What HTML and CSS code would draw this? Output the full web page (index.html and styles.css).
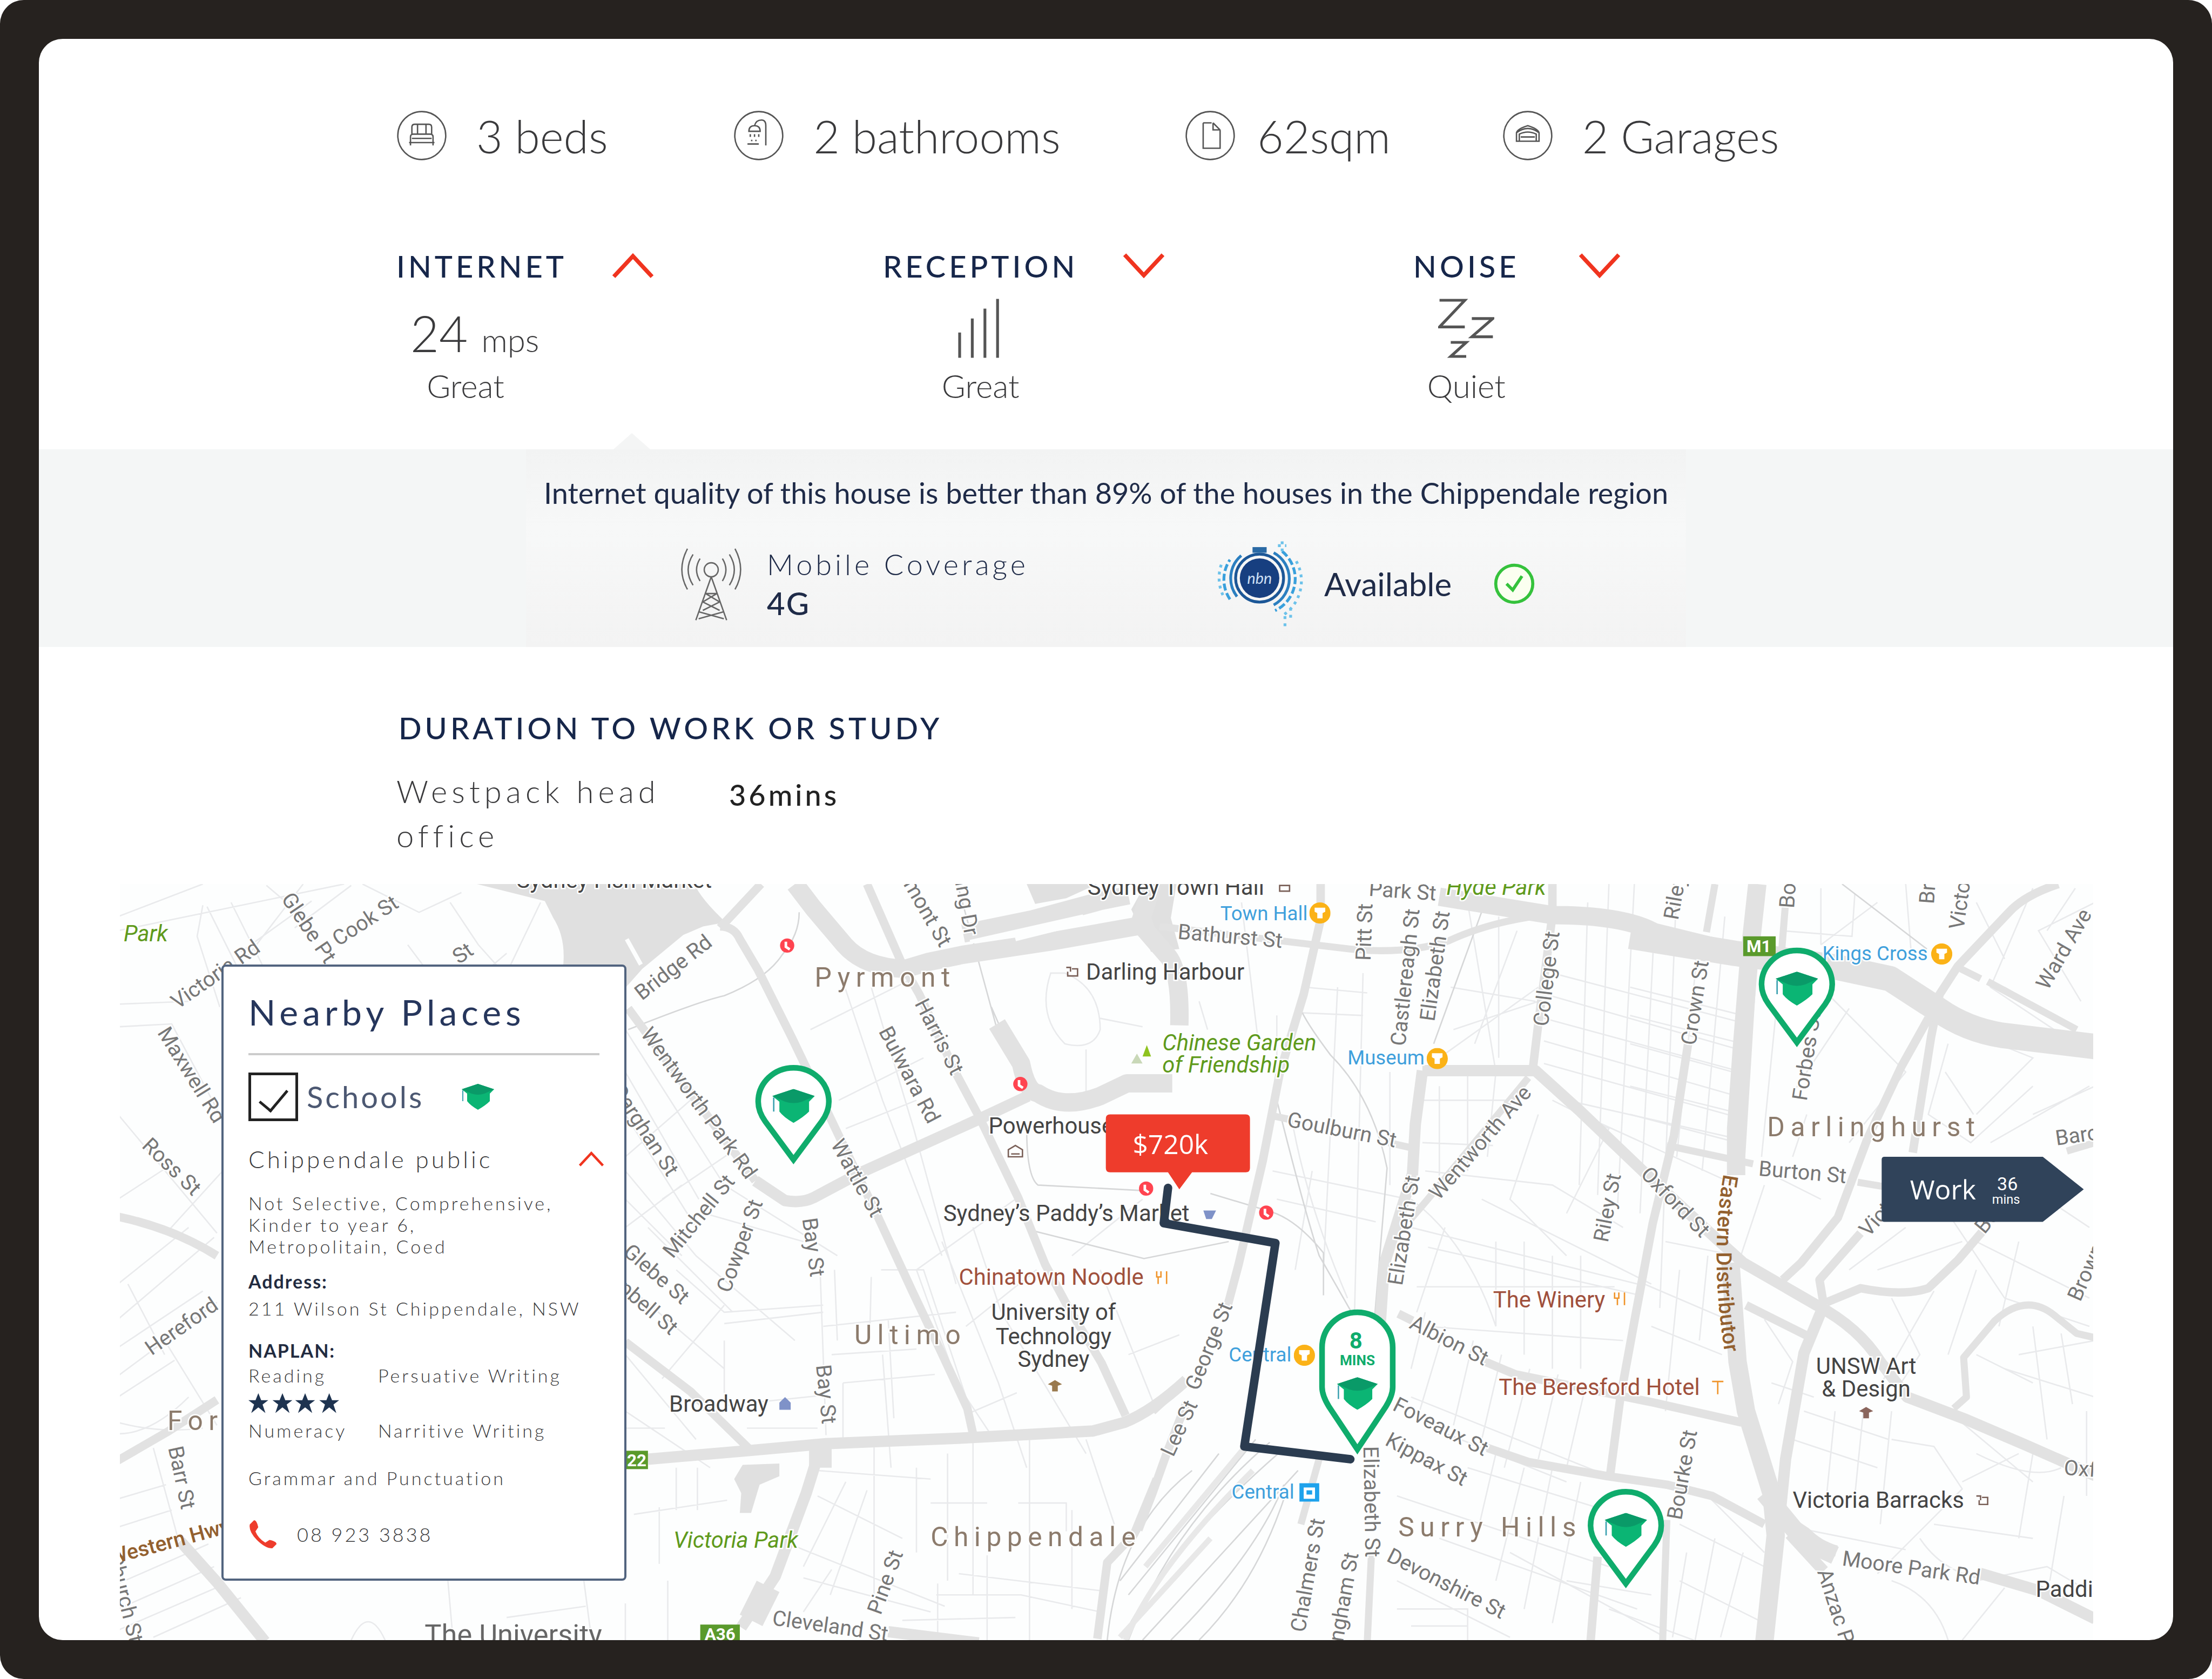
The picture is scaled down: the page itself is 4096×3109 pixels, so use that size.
FILE: index.html
```html
<!DOCTYPE html>
<html lang="en">
<head>
  <meta charset="UTF-8">
  <meta name="viewport" content="width=device-width, initial-scale=1.0">
  <title>Property details</title>
  <link rel="stylesheet" href="styles.css">
</head>
<body>
  <div class="frame">
    <main class="screen">

      <ul class="facts">
        <li>
          <svg class="fact-icon" viewBox="0 0 36 36"><circle cx="18" cy="18" r="17"/><path d="M11 17v-5q0-2 2-2h10q2 0 2 2v5M15 10v7M21 10v7M10 23v-4q0-2 2-2h12q2 0 2 2v4zM9 23h18M10 25v-2M26 25v-2M11 20h14"/></svg>
          <span>3 beds</span>
        </li>
        <li>
          <svg class="fact-icon" viewBox="0 0 36 36"><circle cx="18" cy="18" r="17"/><path d="M23 25V11q0-4-3-4-4 0-5 4M11 15q0-4 4-4t4 4zM12 17v2M15 17v2M18 17v2M13 21v1M16 21v1M10 24h8"/></svg>
          <span>2 bathrooms</span>
        </li>
        <li>
          <svg class="fact-icon" viewBox="0 0 36 36"><circle cx="18" cy="18" r="17"/><path d="M13 9v18h12V14M13 9h6M20 9l5 5M20 9v5h5"/></svg>
          <span>62sqm</span>
        </li>
        <li>
          <svg class="fact-icon" viewBox="0 0 36 36"><circle cx="18" cy="18" r="17"/><path d="M10 22v-6q1-3 8-5 7 2 8 5v6zM12 22v-5q6-3 12 0v5M13 19h10M10 16q8-6 16 0"/></svg>
          <span>2 Garages</span>
        </li>
      </ul>

      <section class="metrics">
        <div class="metric metric-internet">
          <h2>INTERNET</h2>
          <button class="toggle" type="button" aria-label="Close internet"><svg viewBox="0 0 30 18"><path d="M1 17 15 2l14 15"/></svg></button>
          <p class="metric-value">24 <small>mps</small></p>
          <p class="metric-label">Great</p>
        </div>
        <div class="metric">
          <h2>RECEPTION</h2>
          <button class="toggle" type="button" aria-label="Open reception"><svg viewBox="0 0 30 18"><path d="M1 1l14 15L29 1"/></svg></button>
          <p class="metric-value"><svg class="metric-icon" viewBox="0 0 40 42"><path d="M5 42V24M14 42V14M23 42V7M32 42V0"/></svg></p>
          <p class="metric-label">Great</p>
        </div>
        <div class="metric metric-noise">
          <h2>NOISE</h2>
          <button class="toggle" type="button" aria-label="Open noise"><svg viewBox="0 0 30 18"><path d="M1 1l14 15L29 1"/></svg></button>
          <p class="metric-value"><svg class="metric-icon" viewBox="0 0 40 42"><path d="M1 1h18L1 20h18M24 14h15L24 27h15M9 31h11L9 41h11"/></svg></p>
          <p class="metric-label">Quiet</p>
        </div>
      </section>

      <section class="band">
        <div class="band-inner">
          <p class="band-text">Internet quality of this house is better than 89% of the houses in the Chippendale region</p>
          <div class="band-row">
            <div class="coverage">
              <svg class="tower" viewBox="0 0 44 54"><circle cx="22" cy="17" r="5"/><path d="M22 22 11 53M22 22l11 31M18 34h8M16 40l12 6M28 40l-12 6M13 47l18 5M31 47l-18 5M18 34l10 6M26 34l-10 6M14 9q-5 8 0 16M30 9q5 8 0 16M9 6q-7 11 0 22M35 6q7 11 0 22M5 2q-8 15 0 29M39 2q8 15 0 29"/></svg>
              <p>Mobile Coverage<strong>4G</strong></p>
            </div>
            <div class="nbn">
              <svg class="nbn-logo" viewBox="0 0 62 62">
                <circle cx="30" cy="27" r="14" fill="#173f80"/>
                <rect x="25" y="5" width="10" height="4" fill="#2a6aa5"/>
                <g fill="none">
                  <circle cx="30" cy="27" r="17" stroke="#1c5797" stroke-width="2"/>
                  <path stroke="#2b7fc0" stroke-width="2" d="M14 40A21 21 0 0 1 17 11M40 9a21 21 0 0 1 0 37"/>
                  <path stroke="#39a0dc" stroke-width="2" stroke-dasharray="5 2" d="M9 42a25 25 0 0 1 0-28M46 8a25 25 0 0 1-5 42"/>
                  <path stroke="#6cc2ea" stroke-width="2" stroke-dasharray="2 3" d="M4 39a29 29 0 0 1-1-22M56 15a29 29 0 0 1-9 38M46 1v8M43 4h6M48 54v8M52 48v8"/>
                </g>
                <text class="nbn-text" x="30" y="31">nbn</text>
              </svg>
              <span>Available</span>
              <svg class="tick" viewBox="0 0 28 28"><circle cx="14" cy="14" r="12"/><path d="m9 14 4 4 6-9"/></svg>
            </div>
          </div>
        </div>
      </section>

      <section class="duration">
        <h2>DURATION TO WORK OR STUDY</h2>
        <div class="duration-row">
          <p>Westpack head office</p>
          <strong>36mins</strong>
        </div>
      </section>

      <section class="map">
        <svg class="map-canvas" viewBox="85 627 1399 535" preserveAspectRatio="xMidYMid slice">
          <defs>
            <symbol id="cap" viewBox="0 0 30 24"><path fill="#0bb574" d="M15 0 30 5l-4 4v7q-4 4-11 8-7-4-10-8V9L0 5z"/><path fill="#0a9a68" d="M15 0 30 5l-9 4q-6 2-12 0L0 5z"/><path stroke="#3aa0b0" d="M1 6v10"/></symbol>
            <symbol id="metro" viewBox="0 0 16 16"><circle cx="8" cy="8" r="8" fill="#fbb217"/><path fill="#fff" d="M4 4h8v3l-2 1v4H6V8L4 7z"/></symbol>
            <symbol id="rail" viewBox="0 0 12 12"><circle cx="6" cy="6" r="5.5" fill="#ff4450"/><path stroke="#fff" stroke-width="2" d="M5 3v4l3 2" fill="none"/></symbol>
            <symbol id="drop" viewBox="-28 -72 56 72" overflow="visible"><path fill="#fff" stroke="#0fac6c" stroke-width="4" d="M0-4-20-31Q-25-38-25-45A25 24 0 0 1 25-45Q25-38 20-31Z"/><use href="#cap" x="-15" y="-54" width="30" height="24"/></symbol>
            <path id="distributor" d="M1226 833Q1215 895 1229 970"/>
          </defs>

          <!-- water -->
          <g class="water">
            <path d="M339 627h154q4 10 22 27l-16 3-14 6-29 24-16 18v-20h-40q2-20-7-34l-6-12z"/>
            <path d="M521 1048l6-10 26-1v9l-14 6-6 20h-8l1-14z"/>
            <path d="M728 627h50l-22 10-22 4zM812 627h22l-4 24 6 22-20 2-14-30z"/>
          </g>

          <!-- small streets -->
          <path class="lane" d="M85 650l60-23M85 660l160-33M145 642l-4 22 16 50M148 643l30 60M165 640l22 44M190 628l26 22M172 675l50-36M216 627l-40 52M250 628l-40 30M258 627l40 20 30-14M320 640l20 30 34 38M290 670l30 40 40-34M384 640l-24 50M85 712l50-2M85 728l38-2 34 64M85 790l70 84M85 850l40-26M120 873l40-44M85 910l50-40M85 935l68-58M85 955l60-40M85 975l70-52M92 910l26 50M118 950l37 60M85 990l40-26M85 1008q30 8 60 4M85 1016q24 0 50-26M110 1026l18 66M85 1062l34-10M85 1082l38-12M85 1122l64-28M85 1140l68-30M85 1155l74-32M110 1160l62-28M250 1162q12-26 24 0M318 1115l4 46M414 1115l6 46M360 1146l56-8M444 730l70 110 80 50M444 760l52 90M444 790l50 80M444 830l50 60 70 60M444 850l40 40M444 870l40-30M460 870l60 60M470 850l50-34M444 820l46-40M500 860l70 20M480 900l34 30 70-5M514 925l-44 52M444 910l70 60M444 960l50 60M444 1000l60 40M514 938l70-8M514 950v44M514 996l68-7M582 905l4 112M584 940l94-10M590 960l60-4M444 1012h28M530 1012h50M596 690l30 90 42 110M618 700l30 100 30 110M575 730l70-35M595 780l60-30M600 800l50-20M625 900l30 0 30 90 20 30M592 900l2 50M618 905l-1 40M630 935l4 70M598 980l65-6M598 980v40h28M626 960l6 80M650 900l36 100M668 880l40 100 20 60M690 870l20 60 60 100M720 850l-70 50M735 900l-50 40M686 1002l35-15M780 900l40 100M760 890l50-40M800 960l36-14M480 1040v30M495 1040v30M450 1073l66-10M468 1068v40M620 1025v110M650 1040v60M672 1030v90M690 1020v110M730 1020v100M770 1020l20 60M660 1065h40M722 1065h34v20M580 1042l80 6M580 1060l60 30M600 1050l-30 60M615 1056l-26 74M560 1094l110 44M570 1118l90 24M680 1115l100 12M664 1130h60l56 12M640 1148l80-2M665 1162v-40M700 1162v-60M730 1162v-50M760 1140v-70M590 1112l-20 30M444 1136v26M474 1120v42"/>
          <path class="lane" d="M745 690q-10 30 10 50 20 5 25-10 0-30-25-40zM780 722l30 6M770 744v40M850 710l6 20M880 640l12 100M905 720v60M966 690l-6 240M925 700l44 4M920 718l46 2M948 700l-10 200M985 760v80M902 830l96 20M905 850l70 16M915 790q10 60 40 130M930 830l-12 70M1008 780h60M1020 770v80M1040 760v70M1060 760l-6 60M1008 810l50 2M1010 830l90 10 50 30M1028 700l60 10M1040 640l20 120M1062 650v100M1090 700l-70 50M1030 730l60-20M1075 660l-30 80M1100 690l130 34M1095 705l140 40M1094 722l140 38M1094 738l140 40M1094 754l144 40M1110 780l124 28M1120 790l110 50M1090 790l-20 60 40 40M1100 780l40 20-30 60M1050 850l120 60M1000 850q40 30 60 90M1000 870l160 40M1012 884l150 34M1024 870l-20 60M1060 880v60M1080 880v80M1100 890v80M1120 890v80M1004 912h140M1010 940l140 10M1010 930l-10 40M1024 940l-18 60M1044 950l-14 60M1064 960l-14 60M1084 970l-18 70M1104 974l-14 60M1124 980l-14 60M1000 990l150 60M990 1060l150 50M1010 1010l100 40M1040 1040l130 40M1060 1030l-14 60M1080 1040l-20 80M1100 1040l-20 100M1120 1050l-20 100M1020 1090l140 50M1070 1100l110 60M990 1120l80 40M990 1140h50v22M1000 1152h40M1110 1120l60 10"/>
          <path class="lane" d="M1125 640l-6 200M1140 627l-8 220M1158 627l-12 230M1172 660l-10 200M1188 627l-12 300M1222 650l-16 180M1202 680l-14 140M1155 700l80 20M1155 720l80 20M1155 740l80 22M1155 770l80 20M1155 790l76 20M1262 660l50 4 2-30M1290 630v40M1350 627l4 50M1330 640l-40 30M1400 640l20 40M1440 630l-30 70 60 40M1484 640l-40 20 30 50M1450 660l20-30M1420 700l50 30M1290 700l60 60-40 50M1310 715l-40 60M1260 700l-12 120M1280 790l-10 30M1380 740l-14 50 30 20 44-40M1378 760l20 30M1390 730l50 20-40 40M1410 810l70-40M1440 790l44-20M1250 840l-20 60M1290 850l-40-20M1420 830l60 40M1400 880l80 40M1380 860l40 60 60 20M1350 870l-40 30M1330 900l60-20M1340 920l20 40-20 30M1370 915l-40 70M1400 900l-20 60M1430 880l-14 60M1430 960l54-10M1420 970l64 20M1440 940l10 80M1460 945l8 50M1400 960l40 20M1180 880l50 10M1190 900l-10 100M1165 910l70 30M1210 890l-6 60M1170 940l50 20M1250 935l20 30-10 30M1255 980l30 10M1278 1000l60 20M1270 1020l60 20M1300 1000l-6 60M1320 1000l-6 60M1340 1000l-8 80M1340 1020l30 5 20 30-60 60M1380 1000l60 50M1400 1030q40 20 60 10M1390 1050l40-20M1440 1030l-10 60M1462 1060l-10 60M1270 1082l80 16M1370 1080l70 10M1360 1090q20 30 60 30M1400 1120l50-10 34 20M1340 1120q30 10 40 42M1420 1125l-30 37M1190 1080l60 30M1195 1100l-10 60M1215 1090l-14 72M1235 1100l-16 60M1190 1120l60 30M1210 1060l40 40M1140 1140l60 22M1478 1060v-60"/>

          <!-- railway lines -->
          <path class="rails" d="M446 730q50-20 68-24 30-12 41-29 12-14 12-30M679 627l30 110M723 760l-20-46M723 850l8 22 80 20 60-12M728 800q0 34 8 40l76 4M858 846l40 12q20 5 40 30v30M923 718q5 10 20 30 30 30 40 80l-10 120M905 780q20 80 30 110l40 70M1016 740l40-110M796 1160q30-60 110-130M800 1162q30-80 100-140M810 1162l110-120M830 1162q60-60 80-110M850 1162q40-40 60-100M794 1120l70-90M800 1130l90-110M785 1162q8-80 60-120M1305 627l60 46"/>
          <path class="rails-wide" d="M798 1162q20-50 90-120M812 1110l70-84M794 1160l64-70"/>

          <!-- main roads -->
          <g class="road">
            <path class="w5" d="M1083 764l-72 87-12 14M902 791l14 3M984 810l18 4M822 657l135 16q40 4 70-6 30-14 73-19M1181 812l61 13M1316 838l24 4M1384 998l9-8-2-28 22-26q22-20 42-4l16 13 13 3M1181 1077l-3 86M972 1100l-3 63M1265 640l-4 50M1215 627l-6 34M1242 690l-8 130M1389 687l14 7M1408 696l63 34M936 1030l-14 50M1484 810l-20 6"/>
            <path class="w6" d="M540 627l-29 31M511 657q10 0 14 9l13 22 24 48 34 71 27 56 24 52 19 40 20 43 4 18M615 627l25 57 12 21 26 56 17 32 27 56 19 47 15 28 25 42 17 37M446 715l90 122M444 951l46 35 41 40M820 1048l-16 39-19 20-7 54M827 1030l-10 28-10 26M841 978l-24 22M827 1030l14-36M1100 627v22l-10 77-4 33M1196 740l-10 65-15 62-12 64-11 60-7 53M1132 1103l-5 60M1458 627q-24 8-35 20l-36 38-13 20-6 30-13 82M1366 722l-19 34-24 51-21 56-26 32-13 12M1318 874l-15 17-14 16 3 18M1294 923l24-10q30 6 48 0l21-20 18-21M1054 1026l29 10 56 10 42 6 32 8 37 20M991 931l10 5M1050 964l24 10 98 20 62 14M1237 925l44 22M83 862q40 8 72 28M83 1036l38-22 34-22M936 627v25l-12 53-17 56-12 62-17 73-8 30"/>
            <path class="w8" d="M129 1092l26 29 34 42M536 837l21 14q12 2 20-2l34-18 84-38 34-16M460 1034l70-6 56-5 97-4 92-5 22-6q20-8 44-30M582 1026l-10 32-22 59-24 36M630 1156l64 8M1008 759l-5 38-2 35-20 64-4 60M1008 759h80l32 29 45 43 50 46 20 18 52 30q30 16 45 40l19 25 42 16 42 18 50 22M1292 925l-14 34-13 75-4 40 18 12q10 10 22 13M1400 1114l44 13 40 20M1268 1087l24 26"/>
            <path class="w13" d="M564 627l13 17 22 26q14 16 43 17l17-5 24-5 60-9 62-11 12-4M683 662l49-10 48-13 20-4M817 627l-9 28 19 22q10 10 9 50M707 726l17 28q4 20 12 21 18 12 44 2l19-9h32M1020 636l80 13q50 0 72 12l57 14M1245 627l-6 55-5 62-4 56v33M1226 895l5 70 6 35 18 58 3 30-8 75M1250 1058l28 34 22 10"/>
            <path class="w18" d="M1155 664l74 12 73 10 37 8 34 22q20 14 45 18l66 8"/>
            <path class="w18" d="M533 1148l12-24M574 1031h16"/>
          </g>
          <path class="gap" d="M688 668l80-18M720 666l80-20M445 666l10 18"/>

          <!-- street names -->
          <g class="street">
            <text transform="translate(220 658) rotate(56)">Glebe Pt</text>
            <text transform="translate(260 653) rotate(-33)">Cook St</text>
            <text transform="translate(154 691) rotate(-35)">Victoria Rd</text>
            <text transform="translate(329 676) rotate(-35)">St</text>
            <text transform="translate(137 762) rotate(58)">Maxwell Rd</text>
            <text transform="translate(123 827) rotate(44)">Ross St</text>
            <text transform="translate(130 940) rotate(-35)">Hereford</text>
            <text transform="translate(130 1047) rotate(78)">Barr St</text>
            <text transform="translate(90 1132) rotate(76)">Church St</text>
            <text transform="translate(478 686) rotate(-38)">Bridge Rd</text>
            <text transform="translate(496 782) rotate(54)">Wentworth Park Rd</text>
            <text class="end" transform="translate(478 832) rotate(57)">Darghan St</text>
            <text transform="translate(496 862) rotate(-51)">Mitchell St</text>
            <text transform="translate(525 883) rotate(-70)">Cowper St</text>
            <text transform="translate(466 903) rotate(41)">Glebe St</text>
            <text class="end" transform="translate(479 943) rotate(41)">Campbell St</text>
            <text transform="translate(608 835) rotate(61)">Wattle St</text>
            <text transform="translate(577 884) rotate(82)">Bay St</text>
            <text transform="translate(586 988) rotate(84)">Bay St</text>
            <text class="end" transform="translate(671 670) rotate(60)">Pyrmont St</text>
            <text class="end" transform="translate(689 663) rotate(80)">Darling Dr</text>
            <text transform="translate(666 735) rotate(63)">Harris St</text>
            <text transform="translate(645 762) rotate(62)">Bulwara Rd</text>
            <text transform="translate(628 1121) rotate(-70)">Pine St</text>
            <text transform="translate(589 1152) rotate(8)">Cleveland St</text>
            <text transform="translate(994 632) rotate(4)">Park St</text>
            <text transform="translate(872 664) rotate(5)">Bathurst St</text>
            <text transform="translate(967 661) rotate(-88)">Pitt St</text>
            <text transform="translate(996 693) rotate(-84)">Castlereagh St</text>
            <text transform="translate(1017 685) rotate(-82)">Elizabeth St</text>
            <text transform="translate(1096 694) rotate(-83)">College St</text>
            <text transform="translate(951 801) rotate(11)">Goulburn St</text>
            <text transform="translate(1049 810) rotate(-49)">Wentworth Ave</text>
            <text transform="translate(1139 856) rotate(-79)">Riley St</text>
            <text transform="translate(995 872) rotate(-81)">Elizabeth St</text>
            <text transform="translate(857 954) rotate(-68)">George St</text>
            <text transform="translate(836 1012) rotate(-65)">Lee St</text>
            <text transform="translate(1027 950) rotate(27)">Albion St</text>
            <text transform="translate(1021 1011) rotate(27)">Foveaux St</text>
            <text transform="translate(1011 1034) rotate(28)">Kippax St</text>
            <text transform="translate(972 1064) rotate(89)">Elizabeth St</text>
            <text transform="translate(927 1116) rotate(-80)">Chalmers St</text>
            <text class="end" transform="translate(958 1100) rotate(-80)">Buckingham St</text>
            <text transform="translate(1025 1122) rotate(27)">Devonshire St</text>
            <text transform="translate(1201 711) rotate(-81)">Crown St</text>
            <text class="start" transform="translate(1184 652) rotate(-80)">Riley St</text>
            <text class="start" transform="translate(1266 644) rotate(-86)">Bourke St</text>
            <text class="start" transform="translate(1365 641) rotate(-86)">Brougham St</text>
            <text class="start" transform="translate(1386 659) rotate(-82)">Victoria St</text>
            <text transform="translate(1462 673) rotate(-60)">Ward Ave</text>
            <text class="start" transform="translate(1275 780) rotate(-81)">Forbes St</text>
            <text transform="translate(1277 831) rotate(5)">Burton St</text>
            <text class="start" transform="translate(1456 807) rotate(-8)">Barcom Ave</text>
            <text transform="translate(1187 852) rotate(46)">Oxford St</text>
            <text class="start" transform="translate(1320 874) rotate(-48)">Victoria</text>
            <text class="start" transform="translate(1402 872) rotate(-50)">Boundary</text>
            <text class="start" transform="translate(1469 921) rotate(-66)">Brown St</text>
            <text class="start" transform="translate(1462 1040) rotate(4)">Oxford St</text>
            <text transform="translate(1354 1111) rotate(8)">Moore Park Rd</text>
            <text class="start" transform="translate(1292 1112) rotate(72)">Anzac Pde</text>
            <text transform="translate(1192 1045) rotate(-80)">Bourke St</text>
          </g>

          <!-- suburbs -->
          <g class="suburb">
            <text x="578" y="693">Pyrmont</text>
            <text x="606" y="946">Ultimo</text>
            <text x="660" y="1089">Chippendale</text>
            <text x="991" y="1082">Surry Hills</text>
            <text x="1252" y="799">Darlinghurst</text>
            <text x="120" y="1007">For</text>
          </g>

          <!-- places -->
          <g class="place">
            <text x="367" y="624">Sydney Fish Market</text>
            <text x="771" y="629">Sydney Town Hall</text>
            <text x="770" y="689">Darling Harbour</text>
            <text x="701" y="798">Powerhouse</text>
            <text x="669" y="860">Sydney’s Paddy’s Market</text>
            <text class="mid" x="747" y="930">University of</text>
            <text class="mid" x="747" y="947">Technology</text>
            <text class="mid" x="747" y="963">Sydney</text>
            <text x="475" y="995">Broadway</text>
            <text class="mid" x="1322" y="968">UNSW Art</text>
            <text class="mid" x="1322" y="984">&amp; Design</text>
            <text x="1270" y="1063">Victoria Barracks</text>
            <text x="1442" y="1126">Paddington</text>
            <text class="big" x="302" y="1158">The University</text>
          </g>
          <g class="place food">
            <text x="680" y="905">Chinatown Noodle</text>
            <text x="1058" y="921">The Winery</text>
            <text x="1062" y="983">The Beresford Hotel</text>
          </g>
          <g class="place park">
            <text x="89" y="662">Park</text>
            <text x="824" y="739">Chinese Garden</text>
            <text x="824" y="755">of Friendship</text>
            <text x="478" y="1091">Victoria Park</text>
            <text x="1025" y="629">Hyde Park</text>
          </g>
          <g class="place station">
            <text x="865" y="648">Town Hall</text>
            <text x="955" y="750">Museum</text>
            <text x="1291" y="676">Kings Cross</text>
            <text x="871" y="960">Central</text>
            <text x="873" y="1057">Central</text>
          </g>
          <text class="highway"><textPath href="#distributor">Eastern Distributor</textPath></text>
          <text class="highway end" transform="translate(164 1081) rotate(-15)">Western Hwy</text>

          <!-- markers of the base map -->
          <use href="#metro" x="928" y="640" width="15" height="15"/>
          <use href="#metro" x="1011" y="743" width="15" height="15"/>
          <use href="#metro" x="1368" y="669" width="15" height="15"/>
          <use href="#metro" x="917" y="953" width="15" height="15"/>
          <use href="#rail" x="553" y="665" width="11" height="11"/>
          <use href="#rail" x="718" y="763" width="11" height="11"/>
          <use href="#rail" x="807" y="837" width="11" height="11"/>
          <use href="#rail" x="892" y="854" width="11" height="11"/>
          <path fill="#1fa2ec" d="M921 1051h14v13h-14z"/><path fill="#fff" d="M924 1054h8v8h-8z"/><path fill="#1fa2ec" d="M926 1056h4v3h-4z"/>
          <path fill="#8fc31f" d="M813 741l3 8h-6z"/><path fill="#c9d8b8" d="M806 747l4 7h-8z"/>
          <path fill="#7f92c8" d="M557 990l4 4v5h-8v-5zM853 858h9l-3 6h-4z"/>
          <path class="poi" d="M756 686h3v3M760 687h4v5h-7v-3M1400 1060h3v3M1404 1061h4v5h-6v-3M907 628h7v4h-7zM715 815l5-3 5 3v5h-10zM717 818h6"/>
          <path fill="#9a7a4e" d="M743 981l5-3 5 3-3 1v4h-4v-4z"/><path fill="#8a655c" d="M1317 1000l5-3 5 3-3 1v4h-4v-4z"/>
          <path class="fork" d="M820 901v4h3v-4M821 905v5M827 901v9M1144 916v4h3v-4M1146 920v5M1151 916v9M1213 979h8M1217 979v9"/>
          <g class="badge">
            <rect x="1235" y="664" width="23" height="14"/><text x="1246" y="671">M1</text>
            <rect x="440" y="1028" width="20" height="13"/><text x="452" y="1035">22</text>
            <rect x="497" y="1151" width="28" height="13"/><text x="511" y="1158">A36</text>
          </g>

          <!-- route, price and work tags, school pins -->
          <path class="route" d="M828 842l-3 25 79 14-22 144 75 9"/>
          <path fill="#ee3c2c" d="M787 790h96q3 0 3 3v35q0 3-3 3h-38l-9 12-8-12h-41q-3 0-3-3v-35q0-3 3-3z"/>
          <text class="tag-text" x="803" y="811">$720k</text>
          <path fill="#30435a" d="M1335 820h112l29 23-29 23h-112q-2 0-2-2v-42q0-2 2-2z"/>
          <text class="tag-text" x="1353" y="843">Work</text>
          <text class="tag-num" x="1422" y="839">36</text>
          <text class="tag-unit" x="1421" y="850">mins</text>
          <use href="#drop" x="535" y="754" width="56" height="72"/>
          <use href="#drop" x="1245" y="671" width="56" height="72"/>
          <use href="#drop" x="1124" y="1054" width="56" height="72"/>
          <path fill="#fff" stroke="#0fac6c" stroke-width="4" d="M962 1027l-20-30q-5-8-5-14v-28a25 25 0 0 1 50 0v28q0 6-5 14z"/>
          <use href="#cap" x="947" y="976" width="30" height="23"/>
          <text class="pin-num" x="961" y="950">8</text>
          <text class="pin-unit" x="962" y="964">MINS</text>
        </svg>

        <aside class="card">
          <h3>Nearby Places</h3>
          <div class="filter">
            <input type="checkbox" id="schools" checked>
            <label for="schools">Schools</label>
            <svg class="filter-cap" viewBox="0 0 30 24"><use href="#cap" width="30" height="24"/></svg>
          </div>
          <div class="school-head">
            <h4>Chippendale public</h4>
            <button class="toggle small" type="button" aria-label="Close school"><svg viewBox="0 0 30 18"><path d="M1 17 15 2l14 15"/></svg></button>
          </div>
          <p class="kind">Not Selective, Comprehensive,<br>Kinder to year 6,<br>Metropolitain, Coed</p>
          <p class="address"><b>Address:</b><br>211 Wilson St Chippendale, NSW</p>
          <div class="naplan">
            <b>NAPLAN:</b>
            <div class="scores">
              <span>Reading</span><span>Persuative Writing</span>
              <svg class="stars" viewBox="0 0 64 14"><path d="M7 0l2 5h5l-4 3 2 6-5-4-5 4 2-6-4-3h5zM24 0l2 5h5l-4 3 2 6-5-4-5 4 2-6-4-3h5zM40 0l2 5h5l-4 3 2 6-5-4-5 4 2-6-4-3h5zM57 0l2 5h5l-4 3 2 6-5-4-5 4 2-6-4-3h5z"/></svg>
              <span>Numeracy</span><span>Narritive Writing</span>
            </div>
            <p class="grammar">Grammar and Punctuation</p>
          </div>
          <a class="phone" href="tel:089233838">
            <svg viewBox="0 0 20 20"><path d="M1 3 4 0q2 0 3 5L5 8q2 5 7 8l3-2q5 1 5 3l-3 3Q12 20 6 14 0 8 1 3z"/></svg>
            08 923 3838
          </a>
        </aside>
      </section>

    </main>
  </div>
</body>
</html>
```

FILE: styles.css
```css
* { box-sizing: border-box; }
body {
  margin: 0;
  background: #fff;
  font-family: Lato, "Open Sans", sans-serif;
  color: #3a3a3c;
}
h2, h3, h4, p, ul { margin: 0; padding: 0; font-weight: 400; }
button { background: none; border: 0; padding: 0; }

.frame {
  display: flex;
  min-height: 100vh;
  padding: 72px;
  background: #26221f;
  border-radius: 44px;
}
.screen {
  flex: 1;
  display: flex; flex-direction: column;
  background: #fff;
  border-radius: 44px;
  overflow: hidden;
}

/* beds, bathrooms, size, garages */
.facts {
  display: grid;
  grid-template-columns: 239fr 320fr 225fr 419fr;
  padding: 132px 148px 0 662px;
  list-style: none;
}
.facts li {
  display: flex; align-items: center; gap: 54px;
  height: 94px;
  font-size: 84px; font-weight: 300;
  white-space: nowrap;
}
.facts li:nth-child(3) { gap: 40px; }
.fact-icon {
  width: 94px; height: 94px;
  fill: none; stroke: #555; stroke-width: 1;
}

/* internet, reception, noise */
.metrics {
  display: grid;
  grid-template-columns: 345fr 376fr 482fr;
  padding: 156px 148px 0 662px;
}
.metric {
  display: grid;
  grid-template-columns: auto 1fr;
  grid-template-rows: 76px 142px 84px;
  column-gap: 84px;
  align-items: center;
}
.metric-noise { column-gap: 110px; }
.metric h2 { font-size: 56px; letter-spacing: 6px; }
.metric h2, .duration h2 { font-weight: 500; color: #16264a; }
.metric p { grid-column: 1; text-align: center; font-weight: 300; }
.metric .metric-value { padding-top: 14px; font-size: 92px; line-height: 98px; }
.metric-value small { font-size: 60px; }
.metric-icon {
  display: block;
  width: 104px; height: 110px;
  margin: 0 auto;
  fill: none; stroke: #555; stroke-width: 2;
}
.metric-label { font-size: 60px; }
.metric-internet .metric-value { padding: 44px 26px 0 0; }
.metric-internet .metric-label { padding-right: 60px; }
.toggle { justify-self: start; }
.toggle svg {
  display: block;
  width: 76px; height: 46px;
  fill: none; stroke: #f0341f; stroke-width: 3;
}
.toggle.small svg { width: 46px; height: 28px; }

/* grey band under the open metric */
.band {
  position: relative;
  margin-top: 76px;
  padding: 0 902px;
  background: #f4f6f6;
}
.band::before {
  content: "";
  position: absolute; left: 1064px; top: -30px;
  border: 34px solid transparent;
  border-top: 0; border-bottom: 30px solid #f4f5f5;
}
.band-inner {
  height: 366px;
  padding: 46px 24px 0;
  background: linear-gradient(#f2f3f3, #f7f8f8 40%, #f3f3f3);
  color: #1f2b48;
}
.band-text { font-size: 54px; line-height: 70px; white-space: nowrap; text-align: center; }
.band-row { display: flex; padding: 36px 0 0 262px; }
.coverage, .nbn { display: flex; align-items: center; padding-top: 16px; }
.coverage { gap: 46px; width: 994px; }
.coverage p { font-size: 54px; line-height: 72px; letter-spacing: 6px; font-weight: 300; }
.coverage strong { display: block; font-size: 58px; letter-spacing: 2px; font-weight: 500; }
.tower { width: 114px; height: 140px; fill: none; stroke: #666; stroke-width: 1; }
.nbn { font-size: 60px; }
.nbn-logo { width: 162px; height: 162px; margin-right: 36px; }
.nbn-text { font-size: 11px; font-style: italic; fill: #cfe0f5; text-anchor: middle; }
.tick { width: 80px; height: 80px; margin-left: 76px; fill: #fbfff0; stroke: #35c23c; stroke-width: 2; }

.duration { padding: 112px 148px 0 662px; height: 439px; }
.duration h2 { padding-left: 4px; font-size: 56px; line-height: 76px; letter-spacing: 6px; }
.duration-row { display: flex; gap: 66px; padding-top: 38px; font-size: 58px; line-height: 82px; letter-spacing: 8px; }
.duration-row p { width: 550px; font-weight: 300; }
.duration-row strong { font-size: 54px; line-height: 96px; letter-spacing: 5px; font-weight: 500; color: #222; }

/* map */
.map {
  position: relative;
  flex: 1;
  min-height: 1399px;
  margin: 0 148px 0 150px;
}
.map-canvas {
  position: absolute; left: 0; top: 0;
  width: 100%; height: 100%;
  background: #fdfefe;
  font-family: Roboto, sans-serif;
}
.water { fill: #e0e0e0; }
.lane { fill: none; stroke: #e9eaec; stroke-width: 1; }
.rails { fill: none; stroke: #d6d7d8; stroke-width: 1; }
.rails-wide { fill: none; stroke: #e8e8e8; stroke-width: 4; }
.road { fill: none; stroke: #e2e2e2; stroke-linejoin: round; }
.w5 { stroke-width: 5; }
.w6 { stroke-width: 6; }
.w8 { stroke-width: 8; }
.w13 { stroke-width: 13; }
.w18 { stroke-width: 18; }
.gap { fill: none; stroke: #fdfefe; stroke-width: 3; }

.map-canvas text { dominant-baseline: central; }
.street { font-size: 15px; fill: #777; text-anchor: middle; }
.street text, .place text, .suburb text { stroke: #fdfefe; stroke-width: 2; paint-order: stroke; }
.start { text-anchor: start; }
.end { text-anchor: end; }
.mid { text-anchor: middle; }
.suburb { font-size: 19px; letter-spacing: 4px; fill: #8c7b6c; }
.place { font-size: 16px; fill: #444; }
.place .big { font-size: 20px; fill: #666; }
.food { fill: #a0503c; }
.park { fill: #5f9a1c; font-style: italic; }
.station { font-size: 14px; fill: #3fa0dc; }
.highway { font-size: 15px; font-weight: 500; fill: #93602f; }
.poi { fill: none; stroke: #7a6058; stroke-width: 1; }
.fork { fill: none; stroke: #f0942a; stroke-width: 1; }
.badge rect { fill: #5a9a2c; }
.badge text { font-size: 12px; font-weight: 700; fill: #fff; text-anchor: middle; }
.route { fill: none; stroke: #2b3c50; stroke-width: 6; stroke-linecap: round; stroke-linejoin: round; }
.tag-text { font-family: "Open Sans", sans-serif; font-size: 19px; fill: #fff; }
.tag-num { font-size: 13px; fill: #fff; text-anchor: middle; }
.tag-unit { font-size: 9px; fill: #fff; text-anchor: middle; }
.pin-num { font-size: 16px; font-weight: 700; fill: #0fac6c; text-anchor: middle; }
.pin-unit { font-size: 10px; font-weight: 700; fill: #0fac6c; text-anchor: middle; }

/* nearby places */
.card {
  position: absolute; left: 188px; top: 149px;
  width: 750px;
  padding: 44px 46px 56px;
  background: #fff;
  border: 4px solid #52647f;
  border-radius: 8px;
  font-size: 34px; line-height: 40px; letter-spacing: 4px;
}
.card, .card p { font-weight: 300; }
.card h3 {
  height: 120px;
  border-bottom: 4px solid #ccc;
  font-size: 66px; line-height: 80px; letter-spacing: 8px;
  color: #26365c;
}
.filter { display: flex; align-items: center; height: 90px; margin-top: 32px; }
.filter input {
  appearance: none;
  width: 92px; height: 90px;
  margin: 0;
  border: 5px solid #222;
  display: grid; place-items: center;
}
.filter input:checked::before {
  content: "";
  width: 24px; height: 46px;
  border: solid #222; border-width: 0 5px 5px 0;
  transform: rotate(40deg);
}
.filter label { margin-left: 16px; font-size: 56px; font-weight: 400; color: #4c5872; }
.filter-cap { width: 60px; height: 48px; margin-left: 70px; }
.school-head { display: flex; justify-content: space-between; align-items: center; margin: 40px -8px 0 0; }
.school-head h4 { font-size: 44px; line-height: 60px; letter-spacing: 5px; font-weight: 300; }
.kind { padding-top: 32px; }
.address { padding-top: 20px; line-height: 50px; }
.card b { font-weight: 700; letter-spacing: 2px; color: #222b40; }
.naplan { padding-top: 33px; }
.scores { display: grid; grid-template-columns: 240px 1fr; row-gap: 12px; padding-top: 6px; white-space: nowrap; }
.stars { grid-column: 1 / 3; width: 168px; height: 38px; fill: #1e3350; }
.grammar { padding-top: 48px; }
.phone { display: flex; align-items: center; gap: 38px; margin-top: 58px; font-size: 36px; line-height: 50px; color: inherit; text-decoration: none; }
.phone svg { width: 52px; height: 52px; fill: #ee3c2c; }
```
